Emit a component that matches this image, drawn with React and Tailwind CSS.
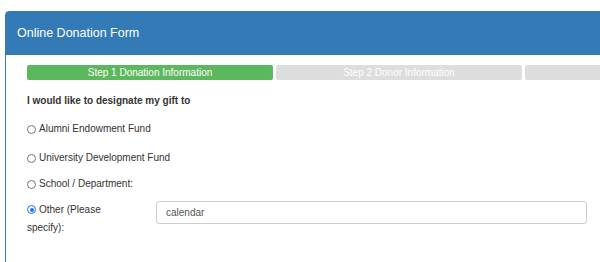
const steps = [
  { id: 1, label: "Step 1 Donation Information", active: true },
  { id: 2, label: "Step 2 Donor Information", active: false },
  { id: 3, label: "", active: false },
];

const options = [
  { id: "alumni", label: "Alumni Endowment Fund", mt: "mt-[14px]" },
  { id: "univ", label: "University Development Fund", mt: "mt-[15px]" },
  { id: "school", label: "School / Department:", mt: "mt-[12px]" },
];

const Radio = ({ checked }) => (
  <span
    className={
      "inline-block w-[9px] h-[9px] rounded-full border shrink-0 " +
      (checked ? "border-[#1a73e8] bg-white p-[1.5px]" : "border-[#767676] bg-white")
    }
  >
    {checked && <span className="block w-full h-full rounded-full bg-[#1a73e8]" />}
  </span>
);

const App = () => {
  return (
    <div
      className="w-[600px] h-[262px] overflow-hidden bg-white text-[#333]"
      style={{ fontFamily: "'Liberation Sans', Arial, sans-serif" }}
    >
      <div className="ml-[5px] mt-[11px] w-[640px] h-[260px] border border-[#337ab7] rounded-t-[4px]">
        <div className="bg-[#337ab7] h-[43px] flex items-center pl-[11px] text-white text-[12.5px]">
          Online Donation Form
        </div>

        <div className="pl-[21px] pt-[10px]">
          <div className="flex gap-[3px]">
            {steps.map((s) => (
              <div
                key={s.id}
                className={
                  "w-[246px] h-[15px] flex items-center justify-center text-[10px] text-white rounded-[2px] shrink-0 " +
                  (s.active ? "bg-[#5cb85c]" : "bg-[#dddddd]")
                }
              >
                {s.label}
              </div>
            ))}
          </div>

          <div className="mt-[14px] text-[10px] font-bold leading-[14px]">
            I would like to designate my gift to
          </div>

          {options.map((o) => (
            <div key={o.id} className={"flex items-center gap-[3px] text-[10px] leading-[14px] " + o.mt}>
              <Radio checked={false} />
              <span>{o.label}</span>
            </div>
          ))}

          <div className="flex mt-[10px]">
            <div className="w-[129px] text-[10px] leading-[17px]">
              <span className="inline-flex items-center gap-[3px]">
                <Radio checked={true} />
                <span>Other (Please</span>
              </span>
              <div>specify):</div>
            </div>
            <div className="w-[431px] h-[23px] border border-[#ccc] rounded-[3px] flex items-center pl-[9px] text-[10px] text-[#555]">
              calendar
            </div>
          </div>
        </div>
      </div>
    </div>
  );
};

export default App;
